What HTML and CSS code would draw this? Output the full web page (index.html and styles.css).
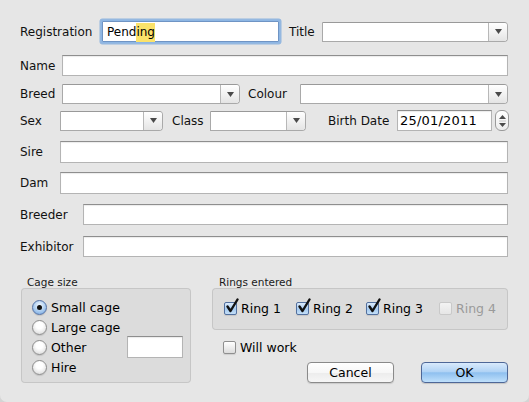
FILE: index.html
```html
<!DOCTYPE html>
<html>
<head>
<meta charset="utf-8">
<link rel="stylesheet" href="styles.css">
</head>
<body>
<div class="window">
  <div class="row r1">
    <span class="lbl w83">Registration</span>
    <div class="field focus w177"><span class="val">Pend<span class="hl">ing</span></span></div>
    <span class="lbl w34 ml9">Title</span>
    <div class="combo grow"><span class="combo-field"></span><span class="combo-btn"><svg width="7" height="5" viewBox="0 0 7 5"><polygon points="0,0 7,0 3.5,5" fill="#4a4a4a"/></svg></span></div>
  </div>

  <div class="row r2">
    <span class="lbl w43">Name</span>
    <div class="field grow h21"></div>
  </div>

  <div class="row r3">
    <span class="lbl w43">Breed</span>
    <div class="combo w178"><span class="combo-field"></span><span class="combo-btn"><svg width="7" height="5" viewBox="0 0 7 5"><polygon points="0,0 7,0 3.5,5" fill="#4a4a4a"/></svg></span></div>
    <span class="lbl w53 ml7">Colour</span>
    <div class="combo grow"><span class="combo-field"></span><span class="combo-btn"><svg width="7" height="5" viewBox="0 0 7 5"><polygon points="0,0 7,0 3.5,5" fill="#4a4a4a"/></svg></span></div>
  </div>

  <div class="row r4">
    <span class="lbl w41">Sex</span>
    <div class="combo w103"><span class="combo-field"></span><span class="combo-btn"><svg width="7" height="5" viewBox="0 0 7 5"><polygon points="0,0 7,0 3.5,5" fill="#4a4a4a"/></svg></span></div>
    <span class="lbl w39 ml8">Class</span>
    <div class="combo w96"><span class="combo-field"></span><span class="combo-btn"><svg width="7" height="5" viewBox="0 0 7 5"><polygon points="0,0 7,0 3.5,5" fill="#4a4a4a"/></svg></span></div>
    <span class="lbl w70 ml21">Birth Date</span>
    <div class="field date w95 h21"><span class="dval">25/01/2011</span></div>
    <span class="stepper">
      <svg width="7" height="16" viewBox="0 0 7 16"><polygon points="0,6 7,6 3.5,2" fill="#4a4a4a"/><line x1="0" y1="8" x2="7" y2="8" stroke="#c8c8c8" stroke-width="1"/><polygon points="0,10 7,10 3.5,14" fill="#4a4a4a"/></svg>
    </span>
  </div>

  <div class="row r5">
    <span class="lbl w41">Sire</span>
    <div class="field grow h22"></div>
  </div>

  <div class="row r6">
    <span class="lbl w41">Dam</span>
    <div class="field grow h22"></div>
  </div>

  <div class="row r7">
    <span class="lbl w64">Breeder</span>
    <div class="field grow h21"></div>
  </div>

  <div class="row r8">
    <span class="lbl w64">Exhibitor</span>
    <div class="field grow h21"></div>
  </div>

  <div class="bottom">
    <div class="cage">
      <div class="glabel">Cage size</div>
      <div class="gbox cagebox">
        <div class="opt"><span class="radio on"><span class="dot"></span></span><span class="otext">Small cage</span></div>
        <div class="opt"><span class="radio"></span><span class="otext">Large cage</span></div>
        <div class="opt other"><span class="radio"></span><span class="otext">Other</span><div class="field otherfield"></div></div>
        <div class="opt"><span class="radio"></span><span class="otext">Hire</span></div>
      </div>
    </div>
    <div class="rings">
      <div class="glabel gl2">Rings entered</div>
      <div class="gbox ringbox">
        <div class="ring i1"><span class="cb on"><svg class="tick" width="14" height="16" viewBox="0 0 14 16"><path d="M2.5 8.5 L5.5 13 L12.5 1.5" fill="none" stroke="#111" stroke-width="2.4" stroke-linecap="round" stroke-linejoin="round"/></svg></span><span class="otext">Ring 1</span></div>
        <div class="ring i2"><span class="cb on"><svg class="tick" width="14" height="16" viewBox="0 0 14 16"><path d="M2.5 8.5 L5.5 13 L12.5 1.5" fill="none" stroke="#111" stroke-width="2.4" stroke-linecap="round" stroke-linejoin="round"/></svg></span><span class="otext">Ring 2</span></div>
        <div class="ring i3"><span class="cb on"><svg class="tick" width="14" height="16" viewBox="0 0 14 16"><path d="M2.5 8.5 L5.5 13 L12.5 1.5" fill="none" stroke="#111" stroke-width="2.4" stroke-linecap="round" stroke-linejoin="round"/></svg></span><span class="otext">Ring 3</span></div>
        <div class="ring i4 disabled"><span class="cb"></span><span class="otext">Ring 4</span></div>
      </div>
      <div class="willwork"><span class="cb"></span><span class="otext">Will work</span></div>
      <div class="buttons">
        <button class="btn cancel">Cancel</button>
        <button class="btn ok">OK</button>
      </div>
    </div>
  </div>
</div>
</body>
</html>
```

FILE: styles.css
```css
html, body {
  margin: 0;
  padding: 0;
  background: #d4d4d4;
}
body {
  font-family: "DejaVu Sans", "Liberation Sans", sans-serif;
  font-size: 12px;
  color: #111;
}
.window {
  width: 529px;
  height: 402px;
  box-sizing: border-box;
  background: #e6e6e6;
  border-radius: 0 0 7px 7px;
  padding: 21px 21px 0 19px;
}
.row {
  display: flex;
  align-items: center;
}
.r1 { height: 21px; }
.r2 { height: 21px; margin-top: 13px; }
.r3 { height: 20px; margin-top: 8px; }
.r4 { height: 21px; margin-top: 6px; }
.r5 { height: 22px; margin-top: 10px; }
.r6 { height: 22px; margin-top: 9px; }
.r7 { height: 21px; margin-top: 10px; }
.r8 { height: 21px; margin-top: 11px; }

.lbl {
  flex: none;
  padding-left: 1px;
  box-sizing: border-box;
  white-space: nowrap;
}
.w83 { width: 83px; }
.w34 { width: 34px; }
.w43 { width: 43px; }
.w53 { width: 53px; }
.w41 { width: 41px; }
.w39 { width: 39px; }
.w70 { width: 70px; }
.w64 { width: 64px; }
.w177 { width: 177px; }
.w178 { width: 178px; }
.w103 { width: 103px; }
.w96 { width: 96px; }
.w95 { width: 95px; }
.ml7 { margin-left: 7px; }
.ml8 { margin-left: 8px; }
.ml9 { margin-left: 9px; }
.ml21 { margin-left: 21px; }
.grow { flex: 1; }
.h21 { height: 21px; }
.h22 { height: 22px; }

.field {
  box-sizing: border-box;
  background: #fff;
  border: 1px solid #b4b4b4;
  border-top-color: #8e8e8e;
  box-shadow: inset 0 1px 1px rgba(0,0,0,0.08);
  display: flex;
  align-items: center;
  flex: none;
}
.field.grow { flex: 1; }
.focus {
  height: 21px;
  border-color: #6f94c4;
  box-shadow: 0 0 0 1px #8db6e4, 0 0 0 2.5px rgba(122,168,222,0.75);
  border-radius: 1px;
}
.val {
  padding-left: 4px;
  color: #000;
}
.hl {
  background: #fbe26a;
  padding: 2px 0 3px;
}
.date {
  margin-left: 0;
}
.dval {
  font-size: 13px;
  padding-left: 2px;
  color: #000;
  letter-spacing: 0.2px;
}
.stepper {
  flex: none;
  width: 14px;
  height: 21px;
  margin-left: 3px;
  box-sizing: border-box;
  border: 1px solid #9a9a9a;
  border-radius: 6px;
  background: linear-gradient(#ffffff, #ececec);
  display: flex;
  align-items: center;
  justify-content: center;
}

.combo {
  box-sizing: border-box;
  height: 20px;
  display: flex;
  border: 1px solid #a9a9a9;
  border-top-color: #999;
  border-radius: 0 4px 4px 0;
  background: #fff;
  flex: none;
}
.combo.grow { flex: 1; }
.combo-field {
  flex: 1;
}
.combo-btn {
  width: 18px;
  border-left: 1px solid #b8b8b8;
  border-radius: 0 3px 3px 0;
  background: linear-gradient(#ffffff, #f2f2f2 50%, #e4e4e4);
  display: flex;
  align-items: center;
  justify-content: center;
}

.bottom {
  display: flex;
  margin-top: 19px;
}
.cage {
  width: 170px;
  margin-left: 2px;
  flex: none;
}
.rings {
  margin-left: 21px;
  flex: 1;
}
.glabel {
  font-size: 10.5px;
  line-height: 12px;
  padding-left: 6px;
  color: #1a1a1a;
}
.gl2 { padding-left: 7px; }
.gbox {
  box-sizing: border-box;
  background: rgba(0,0,0,0.045);
  border: 1px solid rgba(0,0,0,0.1);
  border-radius: 4px;
}
.cagebox {
  height: 95px;
  padding: 8px 7px 0 10px;
}
.opt {
  height: 20px;
  display: flex;
  align-items: center;
}
.otext {
  font-size: 12.5px;
  color: #000;
  margin-left: 4px;
}
.other .otherfield {
  width: 56px;
  height: 22px;
  margin-left: auto;
}
.radio {
  width: 15px;
  height: 15px;
  box-sizing: border-box;
  border-radius: 50%;
  border: 1px solid #8d8d8d;
  background: radial-gradient(circle at 50% 35%, #ffffff 30%, #e6e6e6 70%, #cfcfcf);
  box-shadow: 0 1px 1px rgba(0,0,0,0.12);
  display: flex;
  align-items: center;
  justify-content: center;
  flex: none;
}
.radio.on {
  border-color: #5471a4;
  background: radial-gradient(circle at 50% 35%, #e2eefb 15%, #a9cbef 55%, #6d9fdc);
}
.dot {
  width: 5px;
  height: 5px;
  border-radius: 50%;
  background: #111;
}
.ringbox {
  height: 42px;
  padding: 9px 0 0 11px;
  display: flex;
}
.ring {
  display: flex;
  align-items: center;
  height: 20px;
  flex: none;
}
.i1 { width: 72px; }
.i2 { width: 70px; }
.i3 { width: 73px; }
.cb {
  position: relative;
  width: 13px;
  height: 13px;
  box-sizing: border-box;
  border: 1px solid #8f8f8f;
  border-radius: 2px;
  background: linear-gradient(#ffffff, #eaeaea 60%, #dcdcdc);
  box-shadow: 0 1px 1px rgba(0,0,0,0.1);
  flex: none;
}
.cb.on {
  border-color: #52709f;
  background: linear-gradient(#dcebfb, #a6cbf0 55%, #c3def7);
}
.tick {
  position: absolute;
  left: 0;
  top: -5px;
}
.disabled .cb {
  border-color: #c9c9c9;
  background: linear-gradient(#f3f3f3, #e6e6e6);
  box-shadow: none;
}
.disabled .otext {
  color: #9a9a9a;
}
.willwork {
  display: flex;
  align-items: center;
  height: 20px;
  margin-top: 7px;
  padding-left: 11px;
}
.buttons {
  display: flex;
  justify-content: flex-end;
  margin-top: 5px;
}
.btn {
  width: 87px;
  height: 21px;
  box-sizing: border-box;
  font-family: "DejaVu Sans", "Liberation Sans", sans-serif;
  font-size: 12.5px;
  color: #000;
  border-radius: 4px;
  padding: 0;
  margin: 0;
  line-height: 18px;
}
.cancel {
  border: 1px solid #8a8a8a;
  background: linear-gradient(#ffffff, #f7f7f7 50%, #ececec 51%, #f6f6f6);
  box-shadow: 0 1px 1px rgba(0,0,0,0.12);
}
.ok {
  margin-left: 27px;
  border: 1px solid #4e6797;
  background: linear-gradient(#d9eafc, #b1d3f5 45%, #8fc0ef 52%, #bfe0fb);
  box-shadow: 0 1px 1px rgba(0,0,0,0.15);
}
```
